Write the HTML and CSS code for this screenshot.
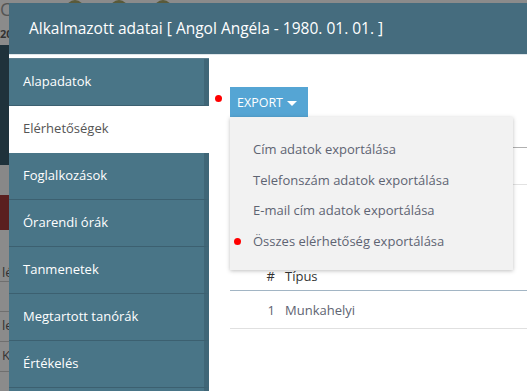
FILE: index.html
```html
<!DOCTYPE html>
<html lang="hu">
<head>
    <meta charset="UTF-8">
    <title>Alkalmazott adatai</title>
    <link rel="stylesheet" href="styles.css">
</head>
<body>
    <div class="page">
        <div class="page-top">
            <span class="page-logo">C</span>
            <span class="page-icon"></span>
            <span class="page-icon"></span>
            <span class="page-icon"></span>
        </div>
        <div class="page-year">20</div>
        <div class="page-nav"></div>
        <div class="page-gap"></div>
        <div class="page-red"></div>
        <div class="page-row tall">lé</div>
        <div class="page-row"></div>
        <div class="page-row">le</div>
        <div class="page-row">K</div>
    </div>

    <div class="modal">
        <div class="modal-header">Alkalmazott adatai [ Angol Angéla - 1980. 01. 01. ]</div>
        <div class="modal-body">
            <ul class="side-menu">
                <li>Alapadatok</li>
                <li class="active">Elérhetőségek</li>
                <li>Foglalkozások</li>
                <li>Órarendi órák</li>
                <li>Tanmenetek</li>
                <li>Megtartott tanórák</li>
                <li>Értékelés</li>
                <li></li>
            </ul>

            <div class="content">
                <div class="export-wrap">
                    <span class="dot dot-btn"></span>
                    <button class="export-btn">EXPORT <span class="caret"></span></button>
                    <ul class="export-menu">
                        <li>Cím adatok exportálása</li>
                        <li>Telefonszám adatok exportálása</li>
                        <li>E-mail cím adatok exportálása</li>
                        <li><span class="dot dot-item"></span>Összes elérhetőség exportálása</li>
                    </ul>
                </div>

                <div class="tabs-line"></div>
                <div class="tabs-line light"></div>

                <table class="grid">
                    <thead>
                        <tr><th class="num">#</th><th>Típus</th></tr>
                    </thead>
                    <tbody>
                        <tr><td class="num">1</td><td>Munkahelyi</td></tr>
                    </tbody>
                </table>
            </div>
        </div>
    </div>
</body>
</html>
```
FILE: styles.css
```css
body {
    margin: 0;
    width: 527px;
    height: 391px;
    overflow: hidden;
    position: relative;
    font-family: 'Open Sans', 'Noto Sans', sans-serif;
    background: #8b8b8b;
}

/* page behind the modal, already dimmed */
.page {
    width: 527px;
    height: 391px;
    color: #2a2a2a;
    font-size: 13px;
}

.page-top {
    height: 26px;
    display: flex;
    align-items: flex-start;
    gap: 26px;
}

.page-logo {
    font-size: 18px;
    line-height: 18px;
    color: #555;
    width: 40px;
}

.page-icon {
    width: 18px;
    height: 18px;
    border-radius: 50%;
    background: #5a5a3a;
}

.page-year {
    height: 19px;
    line-height: 16px;
    font-size: 11px;
    font-weight: bold;
    color: #333;
}

.page-nav {
    height: 120px;
    background: #1f323b;
}

.page-gap {
    height: 30px;
    background: #888;
}

.page-red {
    height: 35px;
    background: #5a1f1f;
}

.page-row {
    height: 29px;
    line-height: 26px;
    border-bottom: 1px solid #6f6f6f;
    padding-left: 2px;
    color: #333;
}

.page-row.tall {
    height: 51px;
    line-height: 84px;
}

.modal {
    position: absolute;
    left: 9px;
    top: 3px;
    width: 540px;
    height: 400px;
    background: #fff;
}

.modal-header {
    height: 51px;
    line-height: 51px;
    background: #456c7e;
    color: #fff;
    font-size: 15.5px;
    padding-left: 20px;
    border-bottom: 1px solid #dfe6ea;
}

.modal-body {
    display: flex;
    padding-top: 3px;
}

.side-menu {
    list-style: none;
    margin: 0;
    padding: 0;
    width: 200px;
    border-top: 1px solid #5d7f8f;
}

.side-menu li {
    height: 46px;
    line-height: 44px;
    padding-left: 14px;
    background: #497587;
    border-right: 5px solid #3f6677;
    border-bottom: 1px solid #3c6070;
    color: #fff;
    font-size: 13px;
}

.side-menu li.active {
    background: #fff;
    color: #555;
    border-right-color: #fff;
    border-bottom-color: #fff;
}

.content {
    flex: 1;
    padding: 29px 0 0 21px;
    position: relative;
}

.export-wrap {
    position: relative;
    height: 30px;
}

.export-btn {
    height: 30px;
    width: 78px;
    border: none;
    background: #55a5d4;
    color: #fff;
    font-family: inherit;
    font-size: 12.5px;
    padding: 0 0 0 7px;
    text-align: left;
}

.caret {
    display: inline-block;
    width: 0;
    height: 0;
    border-left: 5px solid transparent;
    border-right: 5px solid transparent;
    border-top: 5px solid #fff;
    vertical-align: middle;
    margin-left: 1px;
}

.dot {
    position: absolute;
    width: 7px;
    height: 7px;
    border-radius: 50%;
    background: #f00;
}

.dot-btn {
    left: -15px;
    top: 8px;
}

.export-menu {
    position: absolute;
    left: 0;
    top: 30px;
    width: 283px;
    height: 153px;
    margin: 0;
    padding: 17px 0 0 0;
    box-sizing: border-box;
    list-style: none;
    background: #f2f2f2;
    box-shadow: 0 1px 4px rgba(0, 0, 0, 0.25);
    z-index: 2;
}

.export-menu li {
    position: relative;
    height: 30.5px;
    line-height: 30px;
    padding-left: 23px;
    color: #5e6472;
    font-size: 13px;
}

.dot-item {
    left: 4px;
    top: 12px;
}

.tabs-line {
    margin-top: 30px;
    height: 1px;
    background: #b0b0b0;
}

.tabs-line.light {
    margin-top: 36px;
    background: #e2e2e2;
}

.grid {
    margin-top: 76px;
    width: 100%;
    border-collapse: collapse;
    font-size: 13px;
}

.grid th {
    text-align: left;
    color: #333;
    font-weight: 400;
    height: 29px;
    padding: 0;
    border-bottom: 1px solid #a2b5c4;
}

.grid td {
    color: #5e6472;
    height: 37px;
    padding: 0;
    border-bottom: 1px solid #e0e0e0;
}

.grid .num {
    width: 45px;
    text-align: right;
    padding-right: 10px;
}
```
